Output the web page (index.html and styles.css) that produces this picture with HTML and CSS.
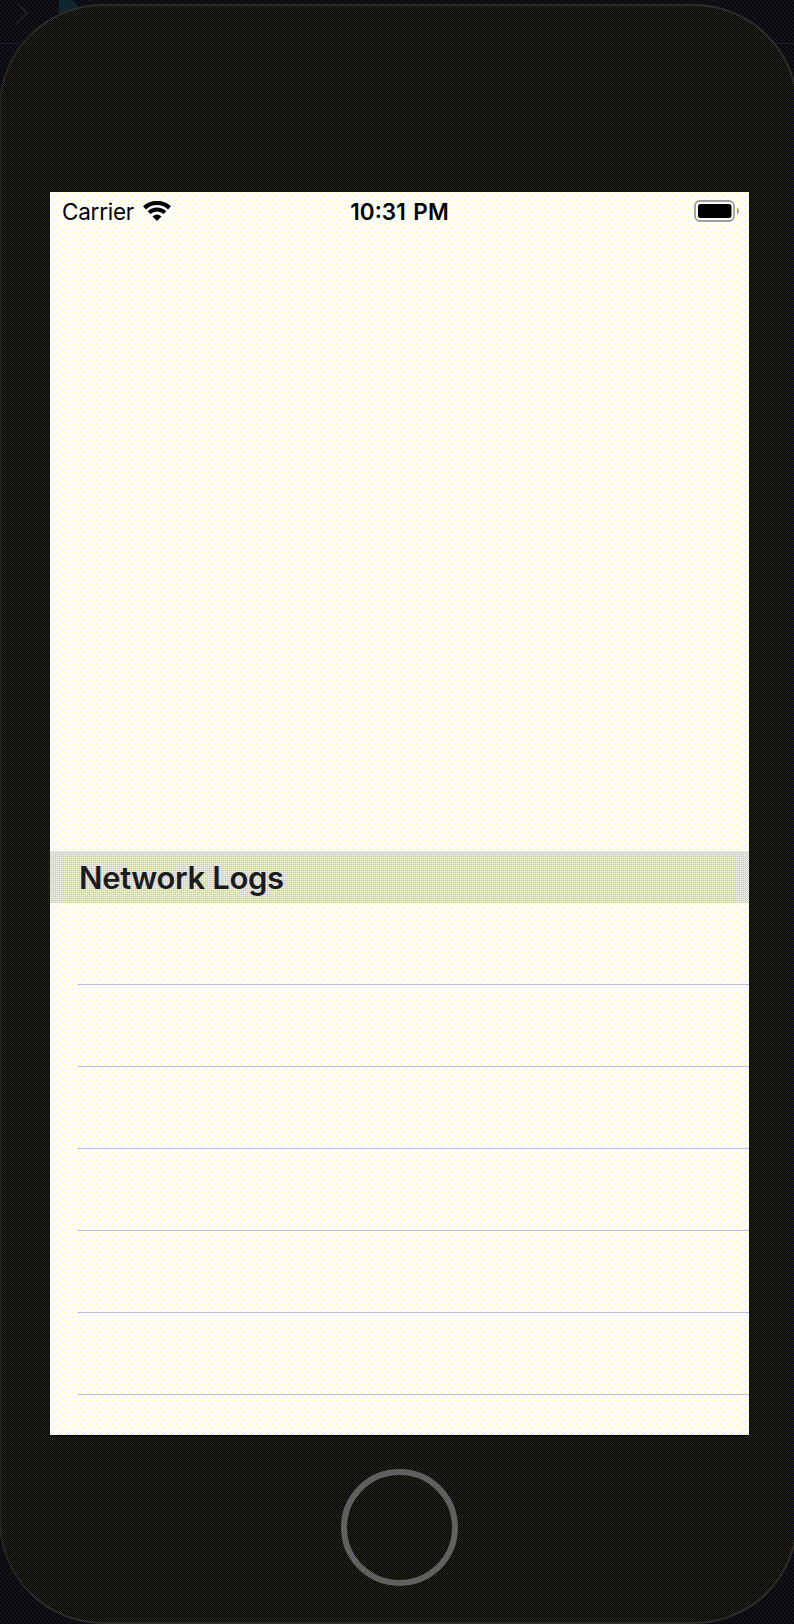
FILE: index.html
```html
<!DOCTYPE html>
<html lang="en">
<head>
<meta charset="utf-8">
<title>Network Logs</title>
<link rel="stylesheet" href="styles.css">
</head>
<body>
<div class="desktop">
  <svg class="backdrop" viewBox="0 0 794 60" width="794" height="60" aria-hidden="true">
    <path d="M17 3L27 13L16 25" fill="none" stroke="#1e1e22" stroke-width="2"/>
    <path d="M59 0H73L82 10L59 17Z" fill="#10262e"/>
    <path d="M0 43.5H794" stroke="#1c1c30"/>
  </svg>
  <div class="phone">
    <main class="screen">
      <header class="status">
        <div class="carrier"><span>Carrier</span>
          <svg class="wifi" viewBox="0 0 28 20" width="28" height="20" aria-hidden="true">
            <path d="M1.500 6.900C8.500 .3 19.500 .3 26.500 6.900" fill="none" stroke="#000" stroke-width="4.300"/>
            <path d="M6 11.600C10.500 7.400 17.500 7.400 22 11.600" fill="none" stroke="#000" stroke-width="3.900"/>
            <path d="M9.500 15.500Q14 11.500 18.500 15.500L14 20Z"/>
          </svg>
        </div>
        <time class="time">10:31 PM</time>
        <svg class="battery" viewBox="0 0 46 22" width="46" height="22" aria-hidden="true">
          <rect x="1" y="1" width="39" height="20" rx="5" fill="none" stroke="#9d9d9a" stroke-width="1.800"/>
          <rect x="4" y="4" width="33.500" height="14" rx="2.500"/>
          <path d="M43 7.500Q45 8.500 45 11T43 14.500Z" fill="#999"/>
        </svg>
      </header>
      <div class="blank"></div>
      <h1 class="section">Network Logs</h1>
      <ul class="rows">
        <li></li><li></li><li></li><li></li><li></li><li></li>
      </ul>
    </main>
    <div class="home"></div>
  </div>
</div>
</body>
</html>
```
FILE: styles.css
```css
* { box-sizing: border-box; }
body { margin: 0; font-family: Inter, "Liberation Sans", sans-serif; color: #000; }
.desktop {
  position: relative;
  width: 794px;
  height: 1624px;
  padding-top: 4px;
  overflow: hidden;
  background: conic-gradient(#080816 25%, #131313 0 50%, #080812 0 75%, #131313 0) 0 0 / 4px 4px;
}
.backdrop { position: absolute; top: 0; left: 0; }
.phone {
  position: relative;
  width: 799px;
  height: 1620px;
  padding: 186px 0 0 49px;
  border: 2px solid #2d2d2d;
  border-left-color: #262620;
  border-radius: 104px;
  margin-left: -1px;
  background:
    conic-gradient(at 1px 1px, transparent 75%, #1a1a68 0) 0 0 / 4px 4px,
    conic-gradient(at 1px 1px, transparent 75%, #1a1a68 0) 2px 2px / 4px 4px,
    conic-gradient(#000 25%, #2c2c18 0 50%, #000 0 75%, #2c2c18 0) 0 0 / 2px 2px;
}
.screen {
  display: flex;
  flex-direction: column;
  width: 699px;
  height: 1243px;
  overflow: hidden;
  background:
    conic-gradient(at 1px 1px, transparent 75%, #ffff8c 0) 6px 0 / 8px 8px,
    conic-gradient(at 1px 1px, transparent 75%, #ffff8c 0) 2px 4px / 8px 8px,
    #fcfcff;
  box-shadow: 0 1px #000;
}
.status {
  display: grid;
  grid-template-columns: 1fr auto 1fr;
  height: 38px;
  align-items: center;
  padding: 0 9px 0 12px;
  font-size: 22.5px;
}
.carrier { display: flex; align-items: center; gap: 9px; letter-spacing: -0.25px; }
.time { font-weight: 600; word-spacing: 2px; margin-right: 3px; }
.battery { justify-self: end; margin-top: -1px; }
.blank { height: 621px; }
.section {
  height: 52px;
  margin: 0;
  padding-left: 29px;
  font-size: 31px;
  letter-spacing: -0.35px;
  line-height: 54px;
  font-weight: 600;
  color: #1b1b1b;
  background: conic-gradient(#dadabf 25%, #d2d2e2 0 50%, #dadabf 0 75%, #f2f2ff 0) 0 0 / 2px 2px;
}
.rows { margin: 0; padding: 0 0 0 28px; list-style: none; }
.rows li {
  height: 82px;
  background: linear-gradient(90deg, #b4b4b4 50%, #c4c4f4 0) 0 100% / 4px 1px repeat-x;
}
.home {
  width: 117px;
  height: 117px;
  margin: 34px 0 0 291px;
  border: 6px solid #606060;
  border-radius: 50%;
}
```
